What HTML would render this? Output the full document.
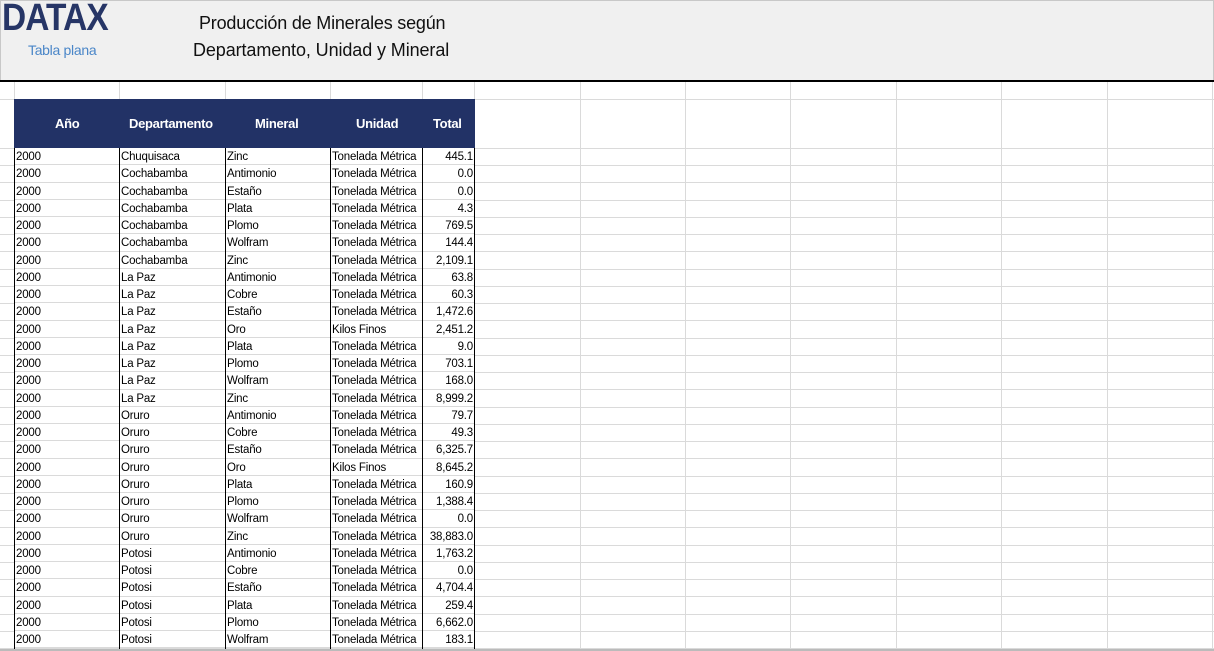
<!DOCTYPE html>
<html><head><meta charset="utf-8"><style>
*{margin:0;padding:0;box-sizing:border-box}
body{width:1214px;height:651px;overflow:hidden;background:#fff;position:relative;font-family:"Liberation Sans",sans-serif}
#hdr{position:absolute;left:0;top:0;width:1214px;height:80px;background:#f0f0f0;border:1px solid #c8c8c8;border-bottom:none}
#line{position:absolute;left:0;top:80px;width:1214px;height:2px;background:#000}
.vl{position:absolute;top:82px;width:1px;height:569px;background:#dadada}
.hl{position:absolute;left:0;width:1214px;height:1px;background:#dadada}
#th{position:absolute;left:14px;top:99px;width:461px;height:49px;background:#223266;color:#fff;font-weight:bold;font-size:13px}
#th div{position:absolute;top:17px;letter-spacing:-0.3px}
.r{position:absolute;left:14px;width:461px;height:17.25px;font-size:11.5px;color:#000;background:#fff;border-bottom:1px solid #dadada}
.r span{position:absolute;top:3px;letter-spacing:-0.2px;white-space:nowrap}
.c1{left:2px}.c2{left:107px}.c3{left:213px}.c4{left:318px}.c5{right:2px}
.bl{position:absolute;top:148px;width:1px;height:503px;background:#000}
</style></head><body>
<div id="hdr">
<div style="position:absolute;left:1px;top:-4px;font-size:38px;font-weight:bold;color:#263566;letter-spacing:-1px;transform:scaleX(0.88);transform-origin:left;-webkit-text-stroke:0px">DATAX</div>
<div style="position:absolute;left:27px;top:41px;font-size:14px;color:#4a86c8;letter-spacing:-0.3px">Tabla plana</div>
<div style="position:absolute;left:198px;top:12px;font-size:18px;color:#111;letter-spacing:-0.2px">Producción de Minerales según</div>
<div style="position:absolute;left:192px;top:39px;font-size:18px;color:#111;letter-spacing:-0.1px">Departamento, Unidad y Mineral</div>
</div>
<div id="line"></div>
<div class="vl" style="left:14px"></div><div class="vl" style="left:119px"></div><div class="vl" style="left:225px"></div><div class="vl" style="left:330px"></div><div class="vl" style="left:422px"></div><div class="vl" style="left:474px"></div><div class="vl" style="left:580px"></div><div class="vl" style="left:685px"></div><div class="vl" style="left:790px"></div><div class="vl" style="left:896px"></div><div class="vl" style="left:1001px"></div><div class="vl" style="left:1107px"></div><div class="vl" style="left:1212px"></div>
<div class="hl" style="top:99px"></div>
<div class="hl" style="top:148px"></div><div class="hl" style="top:165px"></div><div class="hl" style="top:182px"></div><div class="hl" style="top:200px"></div><div class="hl" style="top:217px"></div><div class="hl" style="top:234px"></div><div class="hl" style="top:251px"></div><div class="hl" style="top:269px"></div><div class="hl" style="top:286px"></div><div class="hl" style="top:303px"></div><div class="hl" style="top:320px"></div><div class="hl" style="top:338px"></div><div class="hl" style="top:355px"></div><div class="hl" style="top:372px"></div><div class="hl" style="top:389px"></div><div class="hl" style="top:407px"></div><div class="hl" style="top:424px"></div><div class="hl" style="top:441px"></div><div class="hl" style="top:458px"></div><div class="hl" style="top:476px"></div><div class="hl" style="top:493px"></div><div class="hl" style="top:510px"></div><div class="hl" style="top:527px"></div><div class="hl" style="top:545px"></div><div class="hl" style="top:562px"></div><div class="hl" style="top:579px"></div><div class="hl" style="top:596px"></div><div class="hl" style="top:614px"></div><div class="hl" style="top:631px"></div><div class="hl" style="top:648px"></div>
<div id="th"><div style="left:41px">Año</div><div style="left:115px">Departamento</div><div style="left:241px">Mineral</div><div style="left:342px">Unidad</div><div style="left:419px">Total</div></div>

<div class="r" style="top:148px"><span class="c1">2000</span><span class="c2">Chuquisaca</span><span class="c3">Zinc</span><span class="c4">Tonelada Métrica</span><span class="c5">445.1</span></div>
<div class="r" style="top:165.25px"><span class="c1">2000</span><span class="c2">Cochabamba</span><span class="c3">Antimonio</span><span class="c4">Tonelada Métrica</span><span class="c5">0.0</span></div>
<div class="r" style="top:182.5px"><span class="c1">2000</span><span class="c2">Cochabamba</span><span class="c3">Estaño</span><span class="c4">Tonelada Métrica</span><span class="c5">0.0</span></div>
<div class="r" style="top:199.75px"><span class="c1">2000</span><span class="c2">Cochabamba</span><span class="c3">Plata</span><span class="c4">Tonelada Métrica</span><span class="c5">4.3</span></div>
<div class="r" style="top:217px"><span class="c1">2000</span><span class="c2">Cochabamba</span><span class="c3">Plomo</span><span class="c4">Tonelada Métrica</span><span class="c5">769.5</span></div>
<div class="r" style="top:234.25px"><span class="c1">2000</span><span class="c2">Cochabamba</span><span class="c3">Wolfram</span><span class="c4">Tonelada Métrica</span><span class="c5">144.4</span></div>
<div class="r" style="top:251.5px"><span class="c1">2000</span><span class="c2">Cochabamba</span><span class="c3">Zinc</span><span class="c4">Tonelada Métrica</span><span class="c5">2,109.1</span></div>
<div class="r" style="top:268.75px"><span class="c1">2000</span><span class="c2">La Paz</span><span class="c3">Antimonio</span><span class="c4">Tonelada Métrica</span><span class="c5">63.8</span></div>
<div class="r" style="top:286px"><span class="c1">2000</span><span class="c2">La Paz</span><span class="c3">Cobre</span><span class="c4">Tonelada Métrica</span><span class="c5">60.3</span></div>
<div class="r" style="top:303.25px"><span class="c1">2000</span><span class="c2">La Paz</span><span class="c3">Estaño</span><span class="c4">Tonelada Métrica</span><span class="c5">1,472.6</span></div>
<div class="r" style="top:320.5px"><span class="c1">2000</span><span class="c2">La Paz</span><span class="c3">Oro</span><span class="c4">Kilos Finos</span><span class="c5">2,451.2</span></div>
<div class="r" style="top:337.75px"><span class="c1">2000</span><span class="c2">La Paz</span><span class="c3">Plata</span><span class="c4">Tonelada Métrica</span><span class="c5">9.0</span></div>
<div class="r" style="top:355px"><span class="c1">2000</span><span class="c2">La Paz</span><span class="c3">Plomo</span><span class="c4">Tonelada Métrica</span><span class="c5">703.1</span></div>
<div class="r" style="top:372.25px"><span class="c1">2000</span><span class="c2">La Paz</span><span class="c3">Wolfram</span><span class="c4">Tonelada Métrica</span><span class="c5">168.0</span></div>
<div class="r" style="top:389.5px"><span class="c1">2000</span><span class="c2">La Paz</span><span class="c3">Zinc</span><span class="c4">Tonelada Métrica</span><span class="c5">8,999.2</span></div>
<div class="r" style="top:406.75px"><span class="c1">2000</span><span class="c2">Oruro</span><span class="c3">Antimonio</span><span class="c4">Tonelada Métrica</span><span class="c5">79.7</span></div>
<div class="r" style="top:424px"><span class="c1">2000</span><span class="c2">Oruro</span><span class="c3">Cobre</span><span class="c4">Tonelada Métrica</span><span class="c5">49.3</span></div>
<div class="r" style="top:441.25px"><span class="c1">2000</span><span class="c2">Oruro</span><span class="c3">Estaño</span><span class="c4">Tonelada Métrica</span><span class="c5">6,325.7</span></div>
<div class="r" style="top:458.5px"><span class="c1">2000</span><span class="c2">Oruro</span><span class="c3">Oro</span><span class="c4">Kilos Finos</span><span class="c5">8,645.2</span></div>
<div class="r" style="top:475.75px"><span class="c1">2000</span><span class="c2">Oruro</span><span class="c3">Plata</span><span class="c4">Tonelada Métrica</span><span class="c5">160.9</span></div>
<div class="r" style="top:493px"><span class="c1">2000</span><span class="c2">Oruro</span><span class="c3">Plomo</span><span class="c4">Tonelada Métrica</span><span class="c5">1,388.4</span></div>
<div class="r" style="top:510.25px"><span class="c1">2000</span><span class="c2">Oruro</span><span class="c3">Wolfram</span><span class="c4">Tonelada Métrica</span><span class="c5">0.0</span></div>
<div class="r" style="top:527.5px"><span class="c1">2000</span><span class="c2">Oruro</span><span class="c3">Zinc</span><span class="c4">Tonelada Métrica</span><span class="c5">38,883.0</span></div>
<div class="r" style="top:544.75px"><span class="c1">2000</span><span class="c2">Potosi</span><span class="c3">Antimonio</span><span class="c4">Tonelada Métrica</span><span class="c5">1,763.2</span></div>
<div class="r" style="top:562px"><span class="c1">2000</span><span class="c2">Potosi</span><span class="c3">Cobre</span><span class="c4">Tonelada Métrica</span><span class="c5">0.0</span></div>
<div class="r" style="top:579.25px"><span class="c1">2000</span><span class="c2">Potosi</span><span class="c3">Estaño</span><span class="c4">Tonelada Métrica</span><span class="c5">4,704.4</span></div>
<div class="r" style="top:596.5px"><span class="c1">2000</span><span class="c2">Potosi</span><span class="c3">Plata</span><span class="c4">Tonelada Métrica</span><span class="c5">259.4</span></div>
<div class="r" style="top:613.75px"><span class="c1">2000</span><span class="c2">Potosi</span><span class="c3">Plomo</span><span class="c4">Tonelada Métrica</span><span class="c5">6,662.0</span></div>
<div class="r" style="top:631px"><span class="c1">2000</span><span class="c2">Potosi</span><span class="c3">Wolfram</span><span class="c4">Tonelada Métrica</span><span class="c5">183.1</span></div>

<div class="bl" style="left:14px"></div><div class="bl" style="left:119px"></div><div class="bl" style="left:225px"></div><div class="bl" style="left:330px"></div><div class="bl" style="left:422px"></div><div class="bl" style="left:474px"></div>
<div style="position:absolute;left:0;top:649px;width:1214px;height:2px;background:#bbb"></div>
</body></html>
